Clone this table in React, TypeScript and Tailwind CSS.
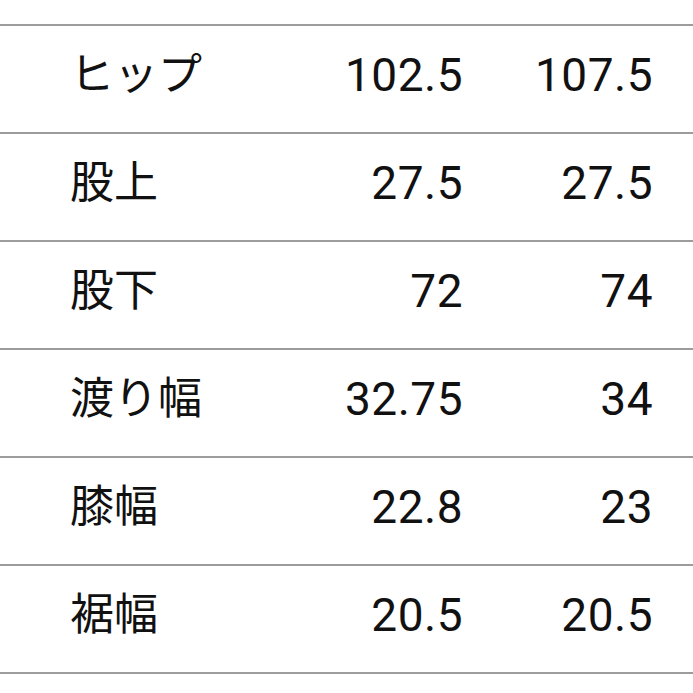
import React from "react";

const rows: [string, string, string][] = [
  ["ヒップ", "102.5", "107.5"],
  ["股上", "27.5", "27.5"],
  ["股下", "72", "74"],
  ["渡り幅", "32.75", "34"],
  ["膝幅", "22.8", "23"],
  ["裾幅", "20.5", "20.5"],
];

export default function App() {
  return (
    <div
      className="w-[693px] h-[693px] bg-white overflow-hidden pt-[24px] text-[#111111]"
      style={{ fontFamily: 'Roboto, "Noto Sans CJK JP", sans-serif' }}
    >
      <div className="border-t-2 border-[#9c9c9c]">
        {rows.map(([label, a, b]) => (
          <div
            key={label}
            className="flex items-center h-[108px] border-b-2 border-[#9c9c9c] pl-[70px] pr-[40px] pb-[8px] text-[46px] leading-none"
          >
            <div className="flex-1 text-[44px]">{label}</div>
            <div className="w-[150px] text-right tracking-[0.5px]">{a}</div>
            <div className="w-[190px] text-right tracking-[0.5px]">{b}</div>
          </div>
        ))}
      </div>
    </div>
  );
}
